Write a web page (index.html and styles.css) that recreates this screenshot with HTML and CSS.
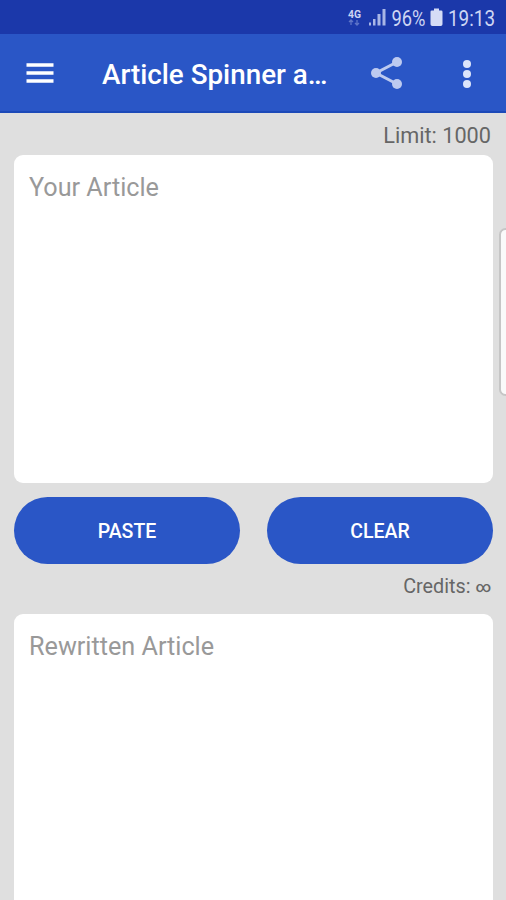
FILE: index.html
```
<!DOCTYPE html>
<html lang="en">
<head>
    <meta charset="UTF-8">
    <meta name="viewport" content="width=device-width, initial-scale=1.0">
    <title>Article Spinner</title>
    <link rel="stylesheet" href="styles.css">
</head>
<body>

<div class="status-bar">
    <svg width="160" height="34" viewBox="0 0 160 34">
        <text class="network" x="2" y="17.5" textLength="13" lengthAdjust="spacingAndGlyphs">4G</text>
        <g class="arrows">
            <path d="M5 25v-5M3 22l2-2 2 2M11 20v5M9 23l2 2 2-2"/>
        </g>
        <g class="signal">
            <rect x="23" y="22.5" width="2" height="3"/>
            <rect x="27" y="19" width="2.5" height="6.5"/>
            <rect x="31.5" y="14" width="3" height="11.5"/>
            <rect x="36.5" y="9" width="3" height="16.5"/>
        </g>
        <text class="status-text" x="45.5" y="25.5" textLength="34" lengthAdjust="spacingAndGlyphs">96%</text>
        <path class="battery" d="M88 8.500h5v2h2.200q1.300 0 1.300 1.300v12.400q0 1.800-1.800 1.800h-8.400q-1.800 0-1.800-1.800V11.800q0-1.300 1.300-1.300H88z"/>
        <text class="status-text" x="102" y="25.5" textLength="47" lengthAdjust="spacingAndGlyphs">19:13</text>
    </svg>
</div>

<header class="app-bar">
    <svg class="menu-icon" width="28" height="22" viewBox="0 0 28 22">
        <path d="M.5 3h27M.5 11h27M.5 19h27"/>
    </svg>
    <h1>Article Spinner a…</h1>
    <svg class="share-icon" width="34" height="36" viewBox="0 0 34 36">
        <path d="M27 7L6 18l21 11"/>
        <circle cx="27" cy="7" r="5"/>
        <circle cx="6" cy="18" r="5"/>
        <circle cx="27" cy="29" r="5"/>
    </svg>
    <svg class="more-icon" width="10" height="30" viewBox="0 0 10 30">
        <circle cx="5" cy="5" r="4"/>
        <circle cx="5" cy="15" r="4"/>
        <circle cx="5" cy="25" r="4"/>
    </svg>
</header>

<main class="container">
    <p class="limit">Limit: 1000</p>
    <textarea class="article" placeholder="Your Article"></textarea>
    <div class="buttons">
        <button type="button" class="button" id="paste">PASTE</button>
        <button type="button" class="button" id="clear">CLEAR</button>
    </div>
    <p class="credits">Credits: <span class="infinity">∞</span></p>
    <textarea class="article" placeholder="Rewritten Article"></textarea>
</main>

<div class="edge-handle"></div>

</body>
</html>
```

FILE: styles.css
```
* {
    box-sizing: border-box;
}

body {
    font-family: Roboto, sans-serif;
    background-color: #dfdfdf;
    margin: 0;
    height: 900px;
    overflow: hidden;
    position: relative;
}

.status-bar {
    height: 34px;
    background-color: #1b38aa;
    display: flex;
    justify-content: flex-end;
}

.status-text {
    font-size: 22px;
    fill: #cdd5f3;
}

.network {
    font-size: 11px;
    font-weight: 700;
    fill: #cdd5f3;
}

.arrows {
    fill: none;
    stroke: #5f75c8;
    stroke-width: 1.3;
}

.signal {
    fill: #a9b6e6;
}

.battery {
    fill: #d5dcf6;
}

.app-bar {
    height: 79px;
    background-color: #2a56c6;
    border-bottom: 2px solid #1c49b8;
    display: flex;
    align-items: center;
    padding: 2px 34px 0 26px;
}

.menu-icon {
    stroke: #fff;
    stroke-width: 3.4;
    margin-top: -1px;
}

h1 {
    width: 228px;
    margin: 2px 0 0 48px;
    color: #fff;
    font-size: 27.8px;
    font-weight: 500;
    white-space: nowrap;
}

.share-icon {
    margin: -1px 0 0 40px;
    fill: #bdcaf0;
}

.share-icon path {
    fill: none;
    stroke: #bdcaf0;
    stroke-width: 3;
}

.more-icon {
    fill: #dce5fa;
    margin: 0 0 0 auto;
}

.container {
    padding: 0 13px 0 14px;
}

.limit,
.credits {
    margin: 0;
    padding-right: 2px;
    text-align: right;
    color: #666;
}

.limit {
    height: 42px;
    line-height: 45px;
    font-size: 21.7px;
}

.credits {
    height: 50px;
    line-height: 46px;
    font-size: 19.8px;
}

.infinity {
    font-size: 15px;
    font-weight: 500;
    vertical-align: 1px;
    line-height: 1;
}

.article {
    display: block;
    width: 100%;
    height: 328px;
    padding: 16px 15px;
    border: none;
    border-radius: 9px;
    background-color: #fff;
    font-family: inherit;
    font-size: 25.2px;
    line-height: 33px;
    resize: none;
}

.article::placeholder {
    color: #999;
}

.buttons {
    display: flex;
    gap: 27px;
    padding-top: 14px;
}

.button {
    flex: 1;
    height: 67px;
    padding: 2px 0 0;
    border: none;
    border-radius: 34px;
    background-color: #2a56c6;
    color: #fff;
    font-family: inherit;
    font-size: 19.5px;
    font-weight: 500;
    cursor: pointer;
}

.edge-handle {
    position: absolute;
    top: 228px;
    right: -6px;
    width: 13px;
    height: 168px;
    border: 2px solid #c6c6c6;
    border-radius: 7px;
    background-color: #fafafa;
}
```
